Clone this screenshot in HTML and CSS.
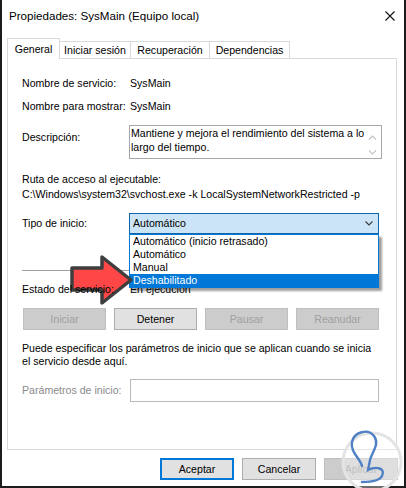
FILE: index.html
```html
<!DOCTYPE html>
<html lang="es">
<head>
<meta charset="utf-8">
<title>Propiedades: SysMain (Equipo local)</title>
<link rel="stylesheet" href="styles.css">
</head>
<body>
<div class="window">
  <div class="titlebar">
    <span class="title">Propiedades: SysMain (Equipo local)</span>
    <svg class="close" width="10" height="10" viewBox="0 0 10 10"><path d="M0.5 0.5 L9.5 9.5 M9.5 0.5 L0.5 9.5" stroke="#111" stroke-width="1.1" fill="none"/></svg>
  </div>
  <div class="tabs">
    <div class="tab active tab-general">General</div>
    <div class="tab tab-sesion">Iniciar sesión</div>
    <div class="tab tab-recup">Recuperación</div>
    <div class="tab tab-dep">Dependencias</div>
  </div>
  <div class="panel">
    <div class="row">
      <span class="label">Nombre de servicio:</span>
      <span class="value">SysMain</span>
    </div>
    <div class="row row-2">
      <span class="label">Nombre para mostrar:</span>
      <span class="value">SysMain</span>
    </div>
    <div class="row row-desc">
      <span class="label label-desc">Descripción:</span>
      <div class="desc-box">
        <div class="desc-text">Mantiene y mejora el rendimiento del sistema a lo<br>largo del tiempo.</div>
        <svg class="scroll" width="17" height="32" viewBox="0 0 17 32"><path d="M5 13.5 L8.5 10 L12 13.5 M5 24.5 L8.5 28 L12 24.5" stroke="#c2c2c2" stroke-width="1.1" fill="none"/></svg>
      </div>
    </div>
    <div class="path-block">
      <div>Ruta de acceso al ejecutable:</div>
      <div>C:\Windows\system32\svchost.exe -k LocalSystemNetworkRestricted -p</div>
    </div>
    <div class="row row-tipo">
      <span class="label label-tipo">Tipo de inicio:</span>
      <div class="combo">
        <span class="combo-text">Automático</span>
        <svg class="chev" width="8" height="5" viewBox="0 0 8 5"><path d="M0.5 0.5 L4 4 L7.5 0.5" stroke="#3a3a3a" stroke-width="1.1" fill="none"/></svg>
        <ul class="dropdown">
          <li>Automático (inicio retrasado)</li>
          <li>Automático</li>
          <li>Manual</li>
          <li class="selected">Deshabilitado</li>
        </ul>
      </div>
    </div>
    <div class="separator"></div>
    <div class="row row-estado">
      <span class="label label-estado">Estado del servicio:</span>
      <span class="value">En ejecución</span>
    </div>
    <div class="svc-buttons">
      <button class="btn disabled">Iniciar</button>
      <button class="btn">Detener</button>
      <button class="btn disabled">Pausar</button>
      <button class="btn disabled">Reanudar</button>
    </div>
    <p class="hint">Puede especificar los parámetros de inicio que se aplican cuando se inicia<br>el servicio desde aquí.</p>
    <div class="row row-param">
      <span class="label label-param">Parámetros de inicio:</span>
      <div class="param-input"></div>
    </div>
  </div>
  <div class="footer">
    <button class="btn btn-foot focused">Aceptar</button>
    <button class="btn btn-foot">Cancelar</button>
    <button class="btn btn-foot disabled">Aplicar</button>
  </div>
</div>

<svg class="arrow" width="74" height="62" viewBox="65 249 74 62">
  <polygon points="72,268 102,268 102,257 131,280 102,303 102,290 72,290" fill="#ff4747" stroke="#3e3e3e" stroke-width="3.5" stroke-linejoin="round"/>
</svg>

<svg class="watermark" width="70" height="60" viewBox="336 428 70 60">
  <circle cx="372" cy="462" r="29" fill="rgba(255,255,255,0.35)" stroke="#e4e4e4" stroke-width="3"/>
  <path d="M362 466 C360 458 350 452 352 442 C354 432 368 428 374 436 C380 444 372 452 370 460 L368 470 C376 466 386 468 382 476 C379 482 368 482 362 482" fill="none" stroke="#4f80c4" stroke-width="2.4" stroke-linecap="round"/>
</svg>
</body>
</html>
```

FILE: styles.css
```css
html, body {
  margin: 0;
  padding: 0;
  background: #ffffff;
}

body {
  font-family: "Liberation Sans", Arial, sans-serif;
  font-size: 10.6px;
  color: #000;
}

.window {
  width: 406px;
  height: 488px;
  box-sizing: border-box;
  border: 2px solid #1c1c1c;
  border-top: none;
  background: #fff;
  display: flex;
  flex-direction: column;
}

.titlebar {
  height: 30px;
  flex: none;
  display: flex;
  align-items: center;
  justify-content: space-between;
  padding: 0 9px 0 7px;
  font-size: 11.6px;
}

.close {
  display: block;
  margin-top: 1px;
}

.tabs {
  display: flex;
  align-items: flex-end;
  height: 20px;
  margin: 8px 0 0 5px;
  flex: none;
  position: relative;
  z-index: 1;
}

.tab {
  height: 17px;
  box-sizing: border-box;
  border: 1px solid #d9d9d9;
  border-left: none;
  border-bottom: none;
  line-height: 17px;
  text-align: center;
  background: #fff;
}

.tab.active {
  height: 21px;
  margin-bottom: -1px;
  border-left: 1px solid #d9d9d9;
  line-height: 20px;
}

.tab-general { width: 53px; }
.tab-sesion { width: 71px; }
.tab-recup { width: 79px; }
.tab-dep { width: 80px; }

.panel {
  margin: 0 7px 0 5px;
  height: 392px;
  flex: none;
  box-sizing: border-box;
  border: 1px solid #d9d9d9;
  padding: 18px 17px 0 14px;
}

.row {
  display: flex;
  line-height: 13px;
}

.label {
  width: 107px;
  flex: none;
  white-space: nowrap;
}

.value {
  padding-left: 1px;
}

.row-2 { margin-top: 10px; }

.row-desc { margin-top: 12px; }

.label-desc { padding-top: 6px; }

.desc-box {
  flex: 1;
  height: 34px;
  box-sizing: border-box;
  border: 1px solid #a8a8a8;
  display: flex;
  line-height: 14px;
}

.desc-text {
  flex: 1;
  padding-left: 1px;
  white-space: nowrap;
}

.scroll {
  flex: none;
  display: block;
}

.path-block {
  margin-top: 13px;
  line-height: 15px;
  white-space: nowrap;
}

.row-tipo { margin-top: 11px; }

.label-tipo { line-height: 21px; }

.combo {
  flex: 1;
  height: 21px;
  box-sizing: border-box;
  border: 1px solid #1265a8;
  background: #cce4f7;
  position: relative;
  display: flex;
  align-items: center;
  justify-content: space-between;
  padding: 0 5px 0 3px;
}

.chev { display: block; }

.dropdown {
  position: absolute;
  left: -1px;
  right: -1px;
  top: 20px;
  margin: 0;
  padding: 0;
  list-style: none;
  background: #fff;
  border: 1px solid #0078d7;
  box-shadow: 3px 3px 2px rgba(0, 0, 0, 0.38);
  z-index: 2;
}

.dropdown li {
  height: 13px;
  line-height: 13px;
  padding-left: 3px;
}

.dropdown li.selected {
  background: #0078d7;
  color: #fff;
}

.separator {
  margin-top: 36px;
  height: 1px;
  background: #a0a0a0;
}

.row-estado { margin-top: 12px; }

.label-estado {
  position: relative;
  z-index: 7;
}

.svc-buttons {
  margin: 12px 0 0 1px;
  display: grid;
  grid-template-columns: repeat(4, 1fr);
  column-gap: 8px;
}

.btn {
  height: 22px;
  box-sizing: border-box;
  border: 1px solid #adadad;
  background: #e1e1e1;
  font-family: "Liberation Sans", Arial, sans-serif;
  font-size: 10.6px;
  color: #000;
  padding: 0;
  margin: 0;
}

.btn.disabled {
  background: #cccccc;
  border-color: #bfbfbf;
  color: #a0a0a0;
}

.hint {
  margin: 12px 0 0 0;
  line-height: 13px;
  white-space: nowrap;
}

.row-param { margin-top: 11px; }

.label-param {
  line-height: 22px;
  color: #8a8a8a;
}

.param-input {
  flex: 1;
  height: 23px;
  box-sizing: border-box;
  border: 1px solid #b9b9b9;
  margin-left: 1px;
}

.footer {
  display: flex;
  justify-content: flex-end;
  gap: 8px;
  margin-top: 8px;
  padding-right: 6px;
}

.btn-foot {
  width: 74px;
}

.btn-foot.focused {
  border: 2px solid #0078d7;
}

.arrow {
  position: absolute;
  left: 65px;
  top: 249px;
  z-index: 5;
}

.watermark {
  position: absolute;
  left: 336px;
  top: 428px;
  z-index: 6;
}
```
